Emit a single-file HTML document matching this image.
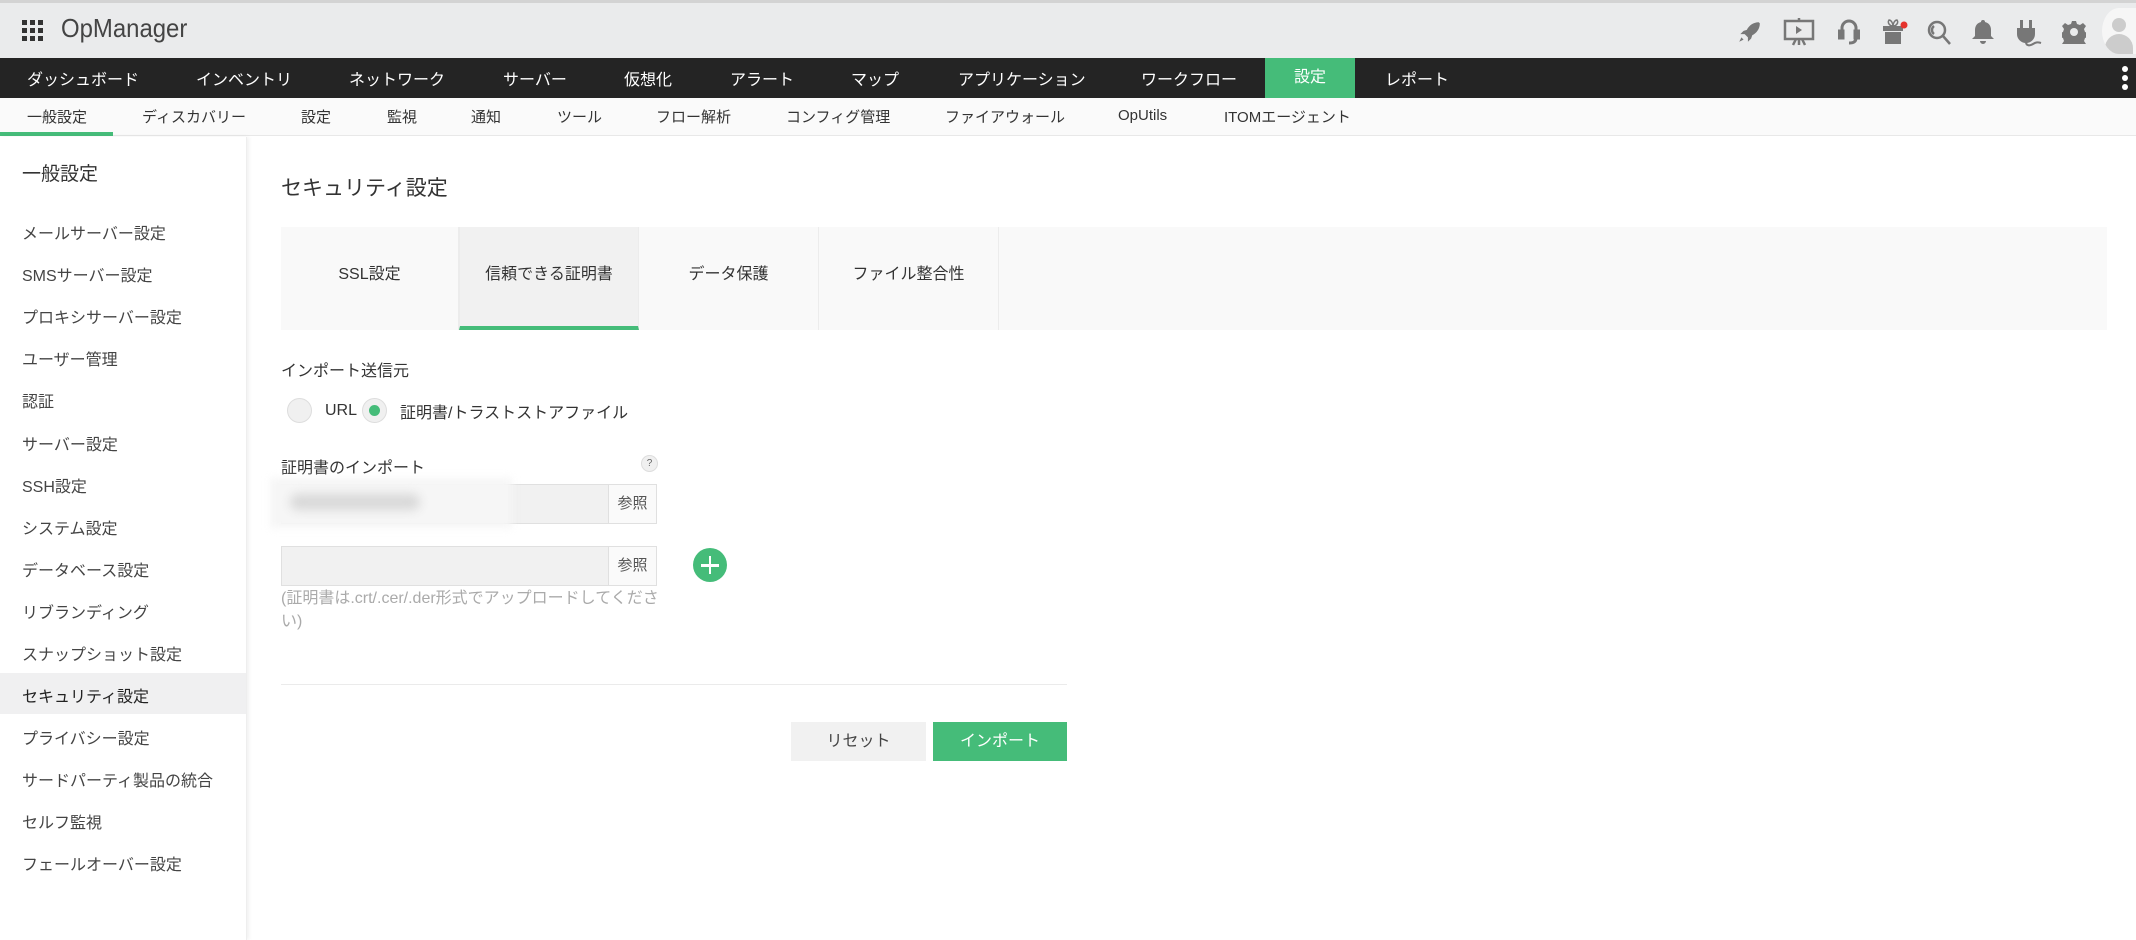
<!DOCTYPE html>
<html><head><meta charset="utf-8"><style>
*{margin:0;padding:0;box-sizing:border-box}
body{width:2136px;height:940px;overflow:hidden;background:#fff;font-family:"Liberation Sans","Noto Sans CJK JP",sans-serif;color:#333;position:relative}
.a{position:absolute;white-space:nowrap}
#hdr{position:absolute;left:0;top:0;width:2136px;height:58px;background:#eaebec;border-top:3px solid #d3d3d3}
#nav{position:absolute;left:0;top:58px;width:2136px;height:40px;background:#242424}
#nav .a{top:8px;color:#fff;font-size:16px}
#sub{position:absolute;left:0;top:98px;width:2136px;height:38px;background:#fafafa;border-bottom:1px solid #e8e8e8}
#sub .a{top:8px;font-size:15px;color:#333}
#side{position:absolute;left:0;top:137px;width:247px;height:803px;background:#fff;box-shadow:2px 0 4px rgba(0,0,0,.06);border-right:1px solid #eee}
.si{position:absolute;left:22px;font-size:16px;color:#444}
.tab{position:absolute;top:227px;height:103px;border-right:1px solid #ececec;font-size:16px;color:#333;text-align:center;line-height:96px}
</style></head><body>
<div id="hdr">
 <svg class="a" style="left:22px;top:17px" width="22" height="22" viewBox="0 0 22 22" fill="#333"><rect x="0" y="0" width="5" height="5"/><rect x="8" y="0" width="5" height="5"/><rect x="16" y="0" width="5" height="5"/><rect x="0" y="8" width="5" height="5"/><rect x="8" y="8" width="5" height="5"/><rect x="16" y="8" width="5" height="5"/><rect x="0" y="16" width="5" height="5"/><rect x="8" y="16" width="5" height="5"/><rect x="16" y="16" width="5" height="5"/></svg>
 <div class="a" style="left:61px;top:10px;font-size:26px;color:#444;transform:scaleX(.92);transform-origin:left">OpManager</div>
 <svg class="a" style="left:1736px;top:16px" width="26" height="26" viewBox="0 0 24 24" fill="#777"><path d="M21 3c-5 0-9 3-11 7l-3 1-3 3 4 0 3 3 0 4 3-3 1-3c4-2 7-6 7-11zM5 17l-2 4 4-2z"/></svg>
 <svg class="a" style="left:1783px;top:14px" width="32" height="30" viewBox="0 0 32 30" fill="none" stroke="#777" stroke-width="2.5"><rect x="2" y="4" width="28" height="18"/><path d="M13 9l6 4-6 4z" fill="#777" stroke="none"/><path d="M16 1v3M10 28l3-6M22 28l-3-6M16 22v6"/></svg>
 <svg class="a" style="left:1838px;top:16px" width="22" height="28" viewBox="0 0 22 28" fill="none" stroke="#777" stroke-width="3"><path d="M4 14V9a7 7 0 0 1 14 0v5"/><rect x="1" y="12" width="4" height="7" fill="#777"/><rect x="17" y="12" width="4" height="7" fill="#777"/><path d="M18 19c0 4-3 5-7 5"/></svg>
 <svg class="a" style="left:1880px;top:13px" width="28" height="30" viewBox="0 0 28 30" fill="#777"><rect x="3" y="10" width="20" height="5"/><rect x="5" y="16" width="16" height="12"/><path d="M9 4c2 0 4 3 4 6-3 0-6-3-4-6zM17 4c-2 0-4 3-4 6 3 0 6-3 4-6z" fill="none" stroke="#777" stroke-width="1.5"/><circle cx="24" cy="9" r="3.5" fill="#e5322d"/></svg>
 <svg class="a" style="left:1926px;top:16px" width="26" height="28" viewBox="0 0 26 28" fill="none" stroke="#777" stroke-width="2.5"><circle cx="11" cy="11" r="8"/><path d="M17 17l7 8"/><path d="M8 7a5 5 0 0 0 0 8"/></svg>
 <svg class="a" style="left:1972px;top:16px" width="22" height="26" viewBox="0 0 22 26" fill="#777"><path d="M11 1a2 2 0 0 1 2 2c4 1 6 4 6 8v6l3 3H0l3-3v-6c0-4 2-7 6-8a2 2 0 0 1 2-2zM8 22h6a3 3 0 0 1-6 0z"/></svg>
 <svg class="a" style="left:2016px;top:15px" width="26" height="30" viewBox="0 0 26 30" fill="#777"><rect x="4" y="2" width="3" height="8"/><rect x="13" y="2" width="3" height="8"/><path d="M1 10h18v6a9 9 0 0 1-18 0z"/><path d="M10 24c0 4 4 4 7 2s5-2 8-1" fill="none" stroke="#777" stroke-width="2"/></svg>
 <svg class="a" style="left:2062px;top:17px" width="24" height="24" viewBox="0 0 24 24" fill="#777"><path d="M10 1h4l1 3 3 1 3-2 3 3-2 3 1 3 3 1v4l-3 1-1 3 2 3-3 3-3-2-3 1-1 3h-4l-1-3-3-1-3 2-3-3 2-3-1-3-3-1v-4l3-1 1-3-2-3 3-3 3 2 3-1z"/><circle cx="12" cy="12" r="4" fill="#eaebec"/></svg>
 <div class="a" style="left:2102px;top:5px;width:34px;height:46px;border-radius:50% 0 0 50%;background:#f6f6f6;overflow:hidden"><div class="a" style="left:10px;top:10px;width:14px;height:14px;border-radius:50%;background:#ccc"></div><div class="a" style="left:3px;top:26px;width:28px;height:20px;border-radius:14px 14px 0 0;background:#ccc"></div></div>
</div>
<div id="nav">
 <div class="a" style="left:27px">ダッシュボード</div><div class="a" style="left:196px">インベントリ</div><div class="a" style="left:349px">ネットワーク</div><div class="a" style="left:503px">サーバー</div><div class="a" style="left:624px">仮想化</div><div class="a" style="left:730px">アラート</div><div class="a" style="left:851px">マップ</div><div class="a" style="left:958px">アプリケーション</div><div class="a" style="left:1141px">ワークフロー</div>
 <div class="a" style="left:1265px;top:0 !important;width:90px;height:40px;background:#45bc79;text-align:center;line-height:40px;position:absolute;color:#fff;font-size:16px">設定</div>
 <div class="a" style="left:1385px">レポート</div>
 <div class="a" style="left:2122px;top:8px;width:6px;height:6px;border-radius:3px;background:#fff"></div><div class="a" style="left:2122px;top:17px;width:6px;height:6px;border-radius:3px;background:#fff"></div><div class="a" style="left:2122px;top:26px;width:6px;height:6px;border-radius:3px;background:#fff"></div>
</div>
<div id="sub">
 <div class="a" style="left:27px">一般設定</div><div class="a" style="left:142px">ディスカバリー</div><div class="a" style="left:301px">設定</div><div class="a" style="left:387px">監視</div><div class="a" style="left:471px">通知</div><div class="a" style="left:557px">ツール</div><div class="a" style="left:656px">フロー解析</div><div class="a" style="left:786px">コンフィグ管理</div><div class="a" style="left:945px">ファイアウォール</div><div class="a" style="left:1118px;top:9px">OpUtils</div><div class="a" style="left:1224px">ITOMエージェント</div>
 <div class="a" style="left:0;top:34px;width:113px;height:4px;background:#45bc79"></div>
</div>
<div id="side">
 <div class="si" style="top:22px;font-size:19px;color:#333">一般設定</div>
 <div class="a" style="left:0;top:536px;width:246px;height:41px;background:#f0f0f1"></div>
 <div class="si" style="top:83px">メールサーバー設定</div>
 <div class="si" style="top:125px">SMSサーバー設定</div>
 <div class="si" style="top:167px">プロキシサーバー設定</div>
 <div class="si" style="top:209px">ユーザー管理</div>
 <div class="si" style="top:251px">認証</div>
 <div class="si" style="top:294px">サーバー設定</div>
 <div class="si" style="top:336px">SSH設定</div>
 <div class="si" style="top:378px">システム設定</div>
 <div class="si" style="top:420px">データベース設定</div>
 <div class="si" style="top:462px">リブランディング</div>
 <div class="si" style="top:504px">スナップショット設定</div>
 <div class="si" style="top:546px;color:#222">セキュリティ設定</div>
 <div class="si" style="top:588px">プライバシー設定</div>
 <div class="si" style="top:630px">サードパーティ製品の統合</div>
 <div class="si" style="top:672px">セルフ監視</div>
 <div class="si" style="top:714px">フェールオーバー設定</div>
</div>
<div class="a" style="left:281px;top:172px;font-size:21px;color:#333">セキュリティ設定</div>
<div class="a" style="left:281px;top:227px;width:1826px;height:103px;background:#f9f9f9"></div>
<div class="tab" style="left:281px;width:178px">SSL設定</div>
<div class="tab" style="left:459px;width:180px;background:#f1f1f1;border-left:1px solid #ececec;border-bottom:4px solid #45bc79">信頼できる証明書</div>
<div class="tab" style="left:639px;width:180px">データ保護</div>
<div class="tab" style="left:819px;width:180px">ファイル整合性</div>
<div class="a" style="left:281px;top:357px;font-size:16px">インポート送信元</div>
<div class="a" style="left:287px;top:398px;width:25px;height:25px;border-radius:50%;background:#f0f0f0;border:1px solid #ddd"></div>
<div class="a" style="left:325px;top:402px;font-size:16px">URL</div>
<div class="a" style="left:362px;top:398px;width:25px;height:25px;border-radius:50%;background:#f0f0f0;border:1px solid #ddd"><div class="a" style="left:6px;top:6px;width:11px;height:11px;border-radius:50%;background:#45bc79"></div></div>
<div class="a" style="left:400px;top:399px;font-size:16px">証明書/トラストストアファイル</div>
<div class="a" style="left:281px;top:454px;font-size:16px">証明書のインポート</div>
<div class="a" style="left:641px;top:455px;width:17px;height:17px;border-radius:50%;background:#f0f0f0;border:1px solid #ddd;font-size:10px;text-align:center;line-height:15px;color:#666">?</div>
<div class="a" style="left:281px;top:484px;width:376px;height:40px;background:#f1f1f1;border:1px solid #e0e0e0"></div>
<div class="a" style="left:270px;top:478px;width:242px;height:50px;background:#f6f6f6;filter:blur(4px)"></div>
<div class="a" style="left:290px;top:494px;width:130px;height:16px;background:#d8d8d8;filter:blur(5px);border-radius:8px"></div>
<div class="a" style="left:608px;top:484px;width:49px;height:40px;background:#fafafa;border:1px solid #e0e0e0;font-size:15px;text-align:center;line-height:38px;color:#555">参照</div>
<div class="a" style="left:281px;top:546px;width:376px;height:40px;background:#f1f1f1;border:1px solid #e0e0e0"></div>
<div class="a" style="left:608px;top:546px;width:49px;height:40px;background:#fafafa;border:1px solid #e0e0e0;font-size:15px;text-align:center;line-height:38px;color:#555">参照</div>
<div class="a" style="left:693px;top:548px;width:34px;height:34px;border-radius:50%;background:#45bc79"><div class="a" style="left:8px;top:16px;width:18px;height:2.5px;background:#fff"></div><div class="a" style="left:15.7px;top:8px;width:2.5px;height:18px;background:#fff"></div></div>
<div class="a" style="left:281px;top:587px;width:380px;font-size:16px;color:#aaa;white-space:normal;line-height:23px">(証明書は.crt/.cer/.der形式でアップロードしてください)</div>
<div class="a" style="left:281px;top:684px;width:786px;height:1px;background:#ebebeb"></div>
<div class="a" style="left:791px;top:722px;width:135px;height:39px;background:#f1f1f1;font-size:16px;text-align:center;line-height:39px;color:#444">リセット</div>
<div class="a" style="left:933px;top:722px;width:134px;height:39px;background:#45bc79;font-size:16px;text-align:center;line-height:39px;color:#fff">インポート</div>
</body></html>
